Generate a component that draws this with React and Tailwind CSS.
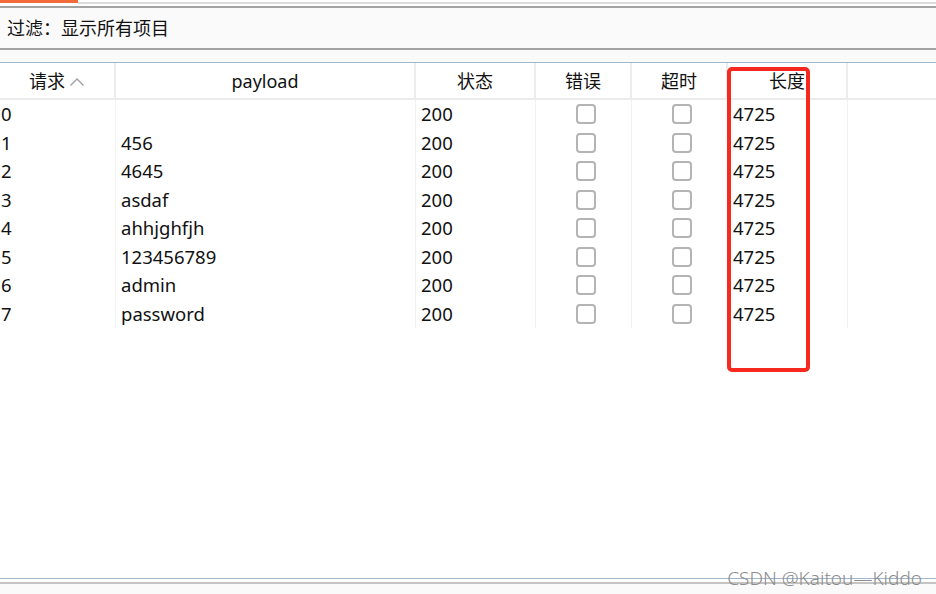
import React from "react";

const cols = [
  { key: "id", label: "请求", w: "w-[116px]" },
  { key: "payload", label: "payload", w: "w-[300px]" },
  { key: "status", label: "状态", w: "w-[120px]" },
  { key: "error", label: "错误", w: "w-[96px]" },
  { key: "timeout", label: "超时", w: "w-[96px]" },
  { key: "length", label: "长度", w: "w-[120px]" },
];

const rows = [
  { id: 0, payload: "" },
  { id: 1, payload: "456" },
  { id: 2, payload: "4645" },
  { id: 3, payload: "asdaf" },
  { id: 4, payload: "ahhjghfjh" },
  { id: 5, payload: "123456789" },
  { id: 6, payload: "admin" },
  { id: 7, payload: "password" },
];

function Box() {
  return <div className="w-[20px] h-[20px] rounded-[4px] border-2 border-[#b4b4b4] bg-white" />;
}

export default function App() {
  return (
    <div
      className="relative w-[936px] h-[594px] bg-white overflow-hidden text-[#111]"
      style={{ fontFamily: '"Noto Sans", "Noto Sans CJK SC", sans-serif' }}
    >
      {/* tab strip */}
      <div className="flex h-[6px]">
        <div className="w-[78px] h-[3px] bg-[#f26b3a]" />
        <div className="flex-1 mt-[2px] h-[2px] bg-[#dcdcdc]" />
      </div>

      {/* filter bar */}
      <div className="h-[2px] bg-[#a3a3a3]" />
      <div className="h-[40px] bg-[#fafafa] flex items-center px-[7px] pt-[1px] text-[18px]">
        过滤：显示所有项目
      </div>
      <div className="h-[2px] bg-[#a3a3a3]" />
      <div className="h-[12px] bg-[#fafafa]" />
      <div className="h-[1px] bg-[#9fb6cd]" />

      {/* header */}
      <div className="flex h-[37px] border-b-2 border-[#ececec] text-[18px]">
        {cols.map((c) => (
          <div
            key={c.key}
            className={`${c.w} shrink-0 border-r-2 border-[#ececec] flex items-center justify-center gap-[4px] pt-[1px]`}
          >
            <span>{c.label}</span>
            {c.key === "id" && (
              <svg width="16" height="10" viewBox="0 0 16 10" className="mt-[1px]">
                <path d="M1.5 8.5 L8 2 L14.5 8.5" fill="none" stroke="#a0a0a0" strokeWidth="1.4" />
              </svg>
            )}
          </div>
        ))}
        <div className="flex-1" />
      </div>

      {/* body */}
      <div className="text-[18.5px]">
        {rows.map((r) => (
          <div key={r.id} className="flex h-[28.5px] leading-none">
            <div className="w-[116px] shrink-0 border-r border-[#f1f1f1] flex items-center pl-[1px]">{r.id}</div>
            <div className="w-[300px] shrink-0 border-r border-[#f1f1f1] flex items-center pl-[5px]">{r.payload}</div>
            <div className="w-[120px] shrink-0 border-r border-[#f1f1f1] flex items-center pl-[5px]">200</div>
            <div className="w-[96px] shrink-0 border-r border-[#f1f1f1] flex items-center justify-center pl-[4px]">
              <Box />
            </div>
            <div className="w-[96px] shrink-0 border-r border-[#f1f1f1] flex items-center justify-center pl-[4px]">
              <Box />
            </div>
            <div className="w-[120px] shrink-0 border-r border-[#f1f1f1] flex items-center pl-[5px]">4725</div>
          </div>
        ))}
      </div>

      {/* annotation box */}
      <div className="absolute left-[727px] top-[67px] w-[83px] h-[305px] border-4 border-[#f7281e] rounded-[5px]" />

      {/* bottom */}
      <div className="absolute left-0 right-0 bottom-0">
        <div className="h-[1px] bg-[#9fb6cd]" />
        <div className="h-[3px] bg-white" />
        <div className="h-[2px] bg-[#c4c4c4]" />
        <div className="h-[10px] bg-[#fafafa]" />
      </div>
      <div className="absolute right-[14px] bottom-[6px] text-[19px] font-light text-[#8c8c8c] leading-none">
        CSDN @Kaitou—Kiddo
      </div>
    </div>
  );
}
